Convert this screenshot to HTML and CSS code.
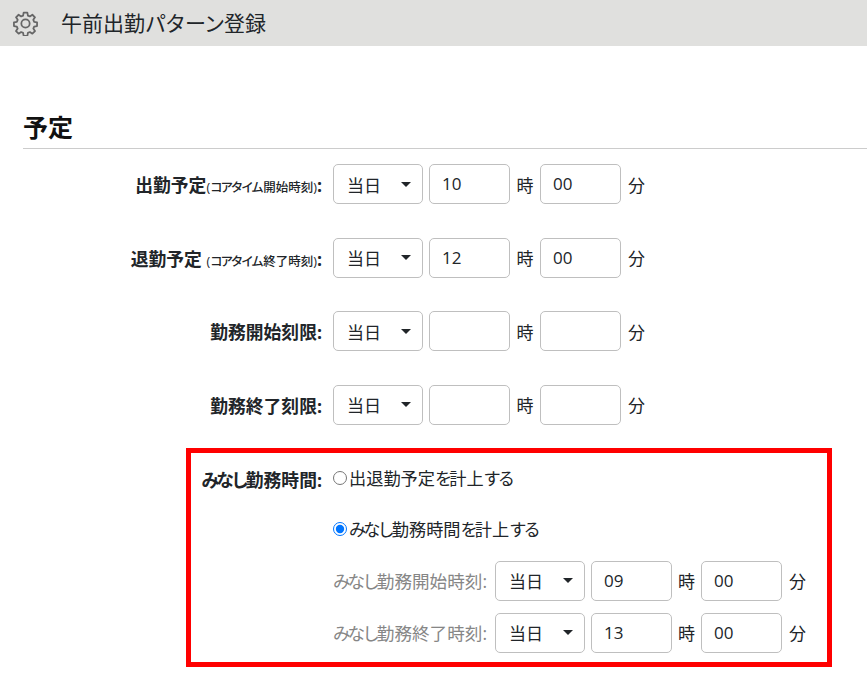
FILE: index.html
```html
<!DOCTYPE html>
<html lang="ja">
<head>
<meta charset="utf-8">
<title>午前出勤パターン登録</title>
<link rel="stylesheet" href="styles.css">
</head>
<body>
<header class="page-header">
  <svg class="gear" viewBox="0 0 24 24" aria-hidden="true">
    <path d="M10.2 1.6h3.6l.5 2.8 1.9.8 2.4-1.6 2.5 2.5-1.6 2.4.8 1.9 2.8.5v3.6l-2.8.5-.8 1.9 1.6 2.4-2.5 2.5-2.4-1.6-1.9.8-.5 2.8h-3.6l-.5-2.8-1.9-.8-2.4 1.6-2.5-2.5 1.6-2.4-.8-1.9-2.8-.5v-3.6l2.8-.5.8-1.9-1.6-2.4 2.5-2.5 2.4 1.6 1.9-.8z"/>
    <circle cx="12" cy="12" r="4"/>
  </svg>
  <h1 class="page-title">午前出勤<span class="kata">パターン</span>登録</h1>
</header>
<main class="content">
  <h2 class="section-title">予定</h2>
  <div class="rows">
    <div class="row">
      <div class="label">出勤予定<small>(<span class="kana">コアタイム</span>開始時刻)</small>:</div>
      <div class="time-group">
        <div class="select">当日<i class="caret"></i></div>
        <div class="input">10</div><span class="unit">時</span>
        <div class="input">00</div><span class="unit">分</span>
      </div>
    </div>
    <div class="row">
      <div class="label">退勤予定 <small>(<span class="kana">コアタイム</span>終了時刻)</small>:</div>
      <div class="time-group">
        <div class="select">当日<i class="caret"></i></div>
        <div class="input">12</div><span class="unit">時</span>
        <div class="input">00</div><span class="unit">分</span>
      </div>
    </div>
    <div class="row">
      <div class="label">勤務開始刻限:</div>
      <div class="time-group">
        <div class="select">当日<i class="caret"></i></div>
        <div class="input"></div><span class="unit">時</span>
        <div class="input"></div><span class="unit">分</span>
      </div>
    </div>
    <div class="row">
      <div class="label">勤務終了刻限:</div>
      <div class="time-group">
        <div class="select">当日<i class="caret"></i></div>
        <div class="input"></div><span class="unit">時</span>
        <div class="input"></div><span class="unit">分</span>
      </div>
    </div>
  </div>
  <section class="highlight">
    <div class="box-label"><span class="kana">みなし</span>勤務時間:</div>
    <div class="box-body">
      <label class="radio-line first"><input type="radio" name="m" class="radio"><span>出退勤予定<span class="kana">を</span>計上<span class="kana">する</span></span></label>
      <label class="radio-line second"><input type="radio" name="m" class="radio" checked><span><span class="kana">みなし</span>勤務時間<span class="kana">を</span>計上<span class="kana">する</span></span></label>
      <div class="sub-row">
        <span class="sub-label"><span class="kana">みなし</span>勤務開始時刻:</span>
        <div class="time-group compact">
          <div class="select">当日<i class="caret"></i></div>
          <div class="input">09</div><span class="unit">時</span>
          <div class="input">00</div><span class="unit">分</span>
        </div>
      </div>
      <div class="sub-row">
        <span class="sub-label"><span class="kana">みなし</span>勤務終了時刻:</span>
        <div class="time-group compact">
          <div class="select">当日<i class="caret"></i></div>
          <div class="input">13</div><span class="unit">時</span>
          <div class="input">00</div><span class="unit">分</span>
        </div>
      </div>
    </div>
  </section>
</main>
</body>
</html>
```
FILE: styles.css
```css
* { box-sizing: border-box; }
html, body { margin: 0; padding: 0; }
body {
  background: #fff;
  color: #212529;
  font-family: "Open Sans", "Noto Sans CJK JP", sans-serif;
  font-size: 17px;
  overflow: hidden;
  height: 680px;
}
.page-header {
  height: 46px;
  background: #e0e0de;
  display: flex;
  align-items: center;
  padding-left: 13px;
  gap: 23px;
}
.gear {
  width: 25px;
  height: 25px;
  fill: none;
  stroke: #666;
  stroke-width: 1.7;
  stroke-linejoin: round;
}
.page-title {
  margin: 0;
  font-size: 21px;
  font-weight: 400;
  line-height: 1;
  color: #212529;
}
.kata { letter-spacing: -1px; }
.kana { letter-spacing: -.17em; }
.content { padding: 66px 0 0 23px; }
.section-title {
  margin: 0;
  height: 37px;
  font-size: 25px;
  font-weight: 700;
  line-height: 31px;
  color: #111;
  border-bottom: 1px solid #ccc;
}
.rows {
  display: flex;
  flex-direction: column;
  gap: 33.67px;
  padding-top: 15px;
}
.row { display: flex; align-items: center; height: 40px; }
.label {
  width: 299px;
  margin-right: 11px;
  text-align: right;
  font-weight: 700;
  font-size: 17.8px;
  white-space: nowrap;
}
.label small { font-size: 12.5px; font-weight: 500; }
.label small .kana { letter-spacing: -.17em; padding-right: .12em; }
.time-group { display: flex; align-items: center; }
.select {
  width: 90px;
  height: 40px;
  border: 1px solid #bfbfbf;
  border-radius: 5px;
  background: #fff;
  padding-left: 13px;
  display: flex;
  align-items: center;
  justify-content: space-between;
  padding-right: 11px;
  margin-right: 6px;
}
.caret {
  width: 0;
  height: 0;
  border-left: 5px solid transparent;
  border-right: 5px solid transparent;
  border-top: 5px solid #212529;
}
.input {
  width: 81px;
  height: 40px;
  border: 1px solid #bfbfbf;
  border-radius: 5px;
  background: #fff;
  padding-left: 12px;
  line-height: 38px;
}
.unit { width: 30px; text-align: center; }
.unit:last-child { width: auto; margin-left: 7px; }
.compact .unit { width: 29px; }
.compact .unit:last-child { width: auto; }
.highlight {
  display: flex;
  width: 646px;
  height: 219px;
  margin: 23px 0 0 163px;
  border: 5px solid #f00;
}
.box-label {
  width: 131px;
  margin-right: 11px;
  padding-top: 13px;
  text-align: right;
  font-weight: 700;
  font-size: 17.8px;
  white-space: nowrap;
}
.box-body { flex: 1; }
.radio-line { display: flex; align-items: center; height: 24px; font-size: 17.2px; }
.radio-line.first { margin-top: 13px; }
.radio-line.second { margin-top: 27px; }
.radio { width: 14px; height: 14px; margin: 0 2px 0 0; }
.sub-row { display: flex; align-items: center; margin-top: 12px; }
.radio-line.second + .sub-row { margin-top: 20px; }
.sub-label { width: 162px; color: #868686; white-space: nowrap; font-size: 17.6px; }
```
